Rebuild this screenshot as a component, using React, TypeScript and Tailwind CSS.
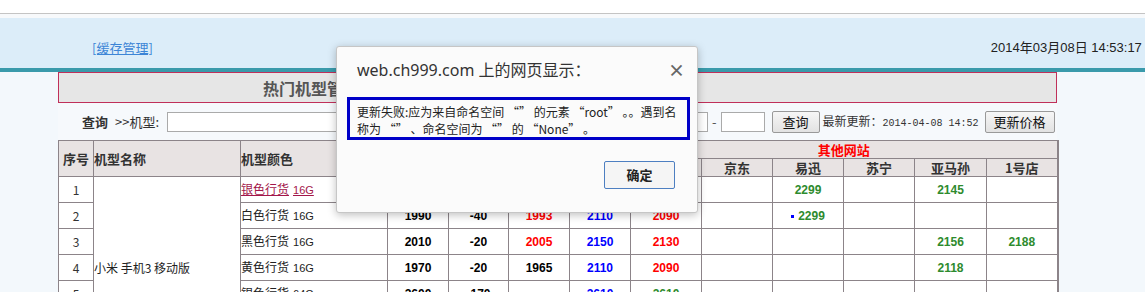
import React from "react";

const cjk = "font-['Noto_Sans_CJK_SC',sans-serif]";
const num = "font-['Liberation_Sans',Arial,sans-serif] font-bold text-[12px]";

type Row = {
  no: number;
  color: string;
  size: string;
  link?: boolean;
  a?: string;
  b?: string;
  c?: [string, string];
  d?: string;
  e?: [string, string];
  yixun?: string;
  dot?: boolean;
  amazon?: string;
  yhd?: string;
};

const rows: Row[] = [
  { no: 1, color: "银色行货", size: "16G", link: true, a: "1990", b: "-40", c: ["1993", "text-[#ff0000]"], d: "2110", e: ["2090", "text-[#ff0000]"], yixun: "2299", amazon: "2145" },
  { no: 2, color: "白色行货", size: "16G", a: "1990", b: "-40", c: ["1993", "text-[#ff0000]"], d: "2110", e: ["2090", "text-[#ff0000]"], yixun: "2299", dot: true },
  { no: 3, color: "黑色行货", size: "16G", a: "2010", b: "-20", c: ["2005", "text-[#ff0000]"], d: "2150", e: ["2130", "text-[#ff0000]"], amazon: "2156", yhd: "2188" },
  { no: 4, color: "黄色行货", size: "16G", a: "1970", b: "-20", c: ["1965", "text-black"], d: "2110", e: ["2090", "text-[#ff0000]"], amazon: "2118" },
  { no: 5, color: "银色行货", size: "64G", a: "2600", b: "-170", d: "2610", e: ["2610", "text-[#2e8b2e]"] },
  { no: 6, color: "白色行货", size: "64G", a: "2600", b: "-170", d: "2610" },
  { no: 7, color: "黑色行货", size: "64G", a: "2600", b: "-170", d: "2610" },
];

const td = "border border-[#8c8489] p-0 align-middle leading-[18px]";
const th = "border border-[#8c8489] p-0 bg-[#e8e3e3] text-[13px] leading-[16px] font-bold text-[#333]";

const App = () => {
  return (
    <div className={`relative w-[1145px] h-[292px] overflow-hidden bg-[#f3f8fc] ${cjk}`}>
      {/* browser strip */}
      <div className="h-[13px] bg-white" />
      <div className="h-px bg-[#c4c4c4]" />
      <div className="h-[4px] bg-[#f7f9fb]" />

      {/* header */}
      <div className="h-[50px] bg-[#dcedf9] flex items-center whitespace-nowrap">
        <a className="ml-[92px] text-[13px] text-[#3d85d6] underline pt-[10px]">[缓存管理]</a>
        <span className="ml-[838px] text-[13px] text-[#222] pt-[10px] font-['Liberation_Sans','Noto_Sans_CJK_SC',sans-serif]">
          2014年03月08日 14:53:17
        </span>
      </div>
      <div className="h-[4px] bg-[#3a9aab]" />

      <main className="ml-[58px] w-[999px]">
        <div className="h-[31px] bg-[#e6e6e6] border border-[#c0305a] flex items-center pl-[204px]">
          <h2 className="text-[16px] font-bold text-[#555]">热门机型管理 &gt;&gt; 小米 手机3 各渠道价格对比</h2>
        </div>

        <div className="h-[37px] flex items-center text-[13px] text-[#333] whitespace-nowrap bg-[#f6f9fc]">
          <span className="ml-[24px] font-bold">查询</span>
          <span className="ml-[7px]">&gt;&gt;机型:</span>
          <input className="ml-[8px] w-[370px] h-[20px] bg-white border border-[#aaa]" />
          <input className="ml-[20px] w-[151px] h-[20px] bg-white border border-[#aaa]" />
          <span className="mx-[4px] text-[#555]">-</span>
          <input className="w-[44px] h-[20px] bg-white border border-[#aaa]" />
          <button className="ml-[7px] w-[48px] h-[22px] border border-[#999] rounded-[2px] bg-gradient-to-b from-[#f6f6f6] to-[#e2e2e2] text-[13px] text-[#111]">
            查询
          </button>
          <span className="ml-[3px] text-[12px] text-[#333]">
            最新更新：<span className="font-['Liberation_Mono',monospace] text-[10px]">2014-04-08 14:52</span>
          </span>
          <button className="ml-[6px] w-[70px] h-[22px] border border-[#999] rounded-[2px] bg-gradient-to-b from-[#f6f6f6] to-[#e2e2e2] text-[13px] text-[#111]">
            更新价格
          </button>
        </div>

        <table className="table-fixed border-collapse w-[999px] border-r-2 border-r-[#8c8489] bg-white">
          <colgroup>
            <col className="w-[35px]" />
            <col className="w-[147px]" />
            <col className="w-[147px]" />
            <col className="w-[61px]" />
            <col className="w-[60px]" />
            <col className="w-[61px]" />
            <col className="w-[61px]" />
            <col className="w-[71px]" />
            <col className="w-[71px]" />
            <col className="w-[71px]" />
            <col className="w-[71px]" />
            <col className="w-[72px]" />
            <col className="w-[71px]" />
          </colgroup>
          <thead>
            <tr className="h-[18px]">
              <th rowSpan={2} className={`${th} text-center`}>序号</th>
              <th rowSpan={2} className={`${th} text-left`}>机型名称</th>
              <th rowSpan={2} className={`${th} text-left`}>机型颜色</th>
              <th rowSpan={2} className={th}>会员价</th>
              <th rowSpan={2} className={th}>差价</th>
              <th rowSpan={2} className={th}>成本价</th>
              <th rowSpan={2} className={th}>市场价</th>
              <th colSpan={6} className={`${th} text-[#ff0000]`}>其他网站</th>
            </tr>
            <tr className="h-[18px]">
              <th className={th}>天猫</th>
              <th className={th}>京东</th>
              <th className={th}>易迅</th>
              <th className={th}>苏宁</th>
              <th className={th}>亚马孙</th>
              <th className={th}>1号店</th>
            </tr>
          </thead>
          <tbody>
            {rows.map((r, i) => (
              <tr key={r.no} className="h-[26px]">
                <td className={`${td} text-center text-[12px] text-[#333]`}>{r.no}</td>
                {i === 0 && (
                  <td rowSpan={rows.length} className={`${td} text-left text-[12px] text-[#222]`}>
                    小米 手机3 移动版
                  </td>
                )}
                <td className={`${td} text-left text-[12px] whitespace-nowrap`}>
                  <span className={r.link ? "text-[#a3164a] underline" : "text-[#222]"}>
                    {r.color}
                    <span className="ml-[4px] font-['Liberation_Sans',sans-serif] text-[11px]">{r.size}</span>
                  </span>
                </td>
                <td className={`${td} text-center ${num} text-black`}>{r.a}</td>
                <td className={`${td} text-center ${num} text-black`}>{r.b}</td>
                <td className={`${td} text-center ${num} ${r.c ? r.c[1] : ""}`}>{r.c?.[0]}</td>
                <td className={`${td} text-center ${num} text-[#0000ff]`}>{r.d}</td>
                <td className={`${td} text-center ${num} ${r.e ? r.e[1] : ""}`}>{r.e?.[0]}</td>
                <td className={td} />
                <td className={`${td} text-center ${num} text-[#2e8b2e]`}>
                  {r.dot && <span className="inline-block w-[3px] h-[3px] bg-[#0000ff] mr-[4px] align-middle" />}
                  {r.yixun}
                </td>
                <td className={td} />
                <td className={`${td} text-center ${num} text-[#2e8b2e]`}>{r.amazon}</td>
                <td className={`${td} text-center ${num} text-[#2e8b2e]`}>{r.yhd}</td>
              </tr>
            ))}
          </tbody>
        </table>
      </main>

      {/* alert dialog */}
      <div className="absolute left-[336px] top-[46px] w-[362px] h-[167px] bg-[#fbfbfb] border border-[#c6c6c6] rounded-[3px] shadow-[0_2px_8px_rgba(0,0,0,0.25)] flex flex-col">
        <div className="flex items-start justify-between h-[50px] pl-[20px] pr-[12px] pt-[11px]">
          <div className="text-[16px] text-[#333] font-['Noto_Sans','Noto_Sans_CJK_SC',sans-serif]">web.ch999.com 上的网页显示：</div>
          <span className="text-[17px] leading-none font-bold text-[#666] mt-[3px]">×</span>
        </div>
        <div className="ml-[10px] mr-[7px] h-[43px] border-[3px] border-[#0000c8] pl-[7px] pt-[3px] text-[12px] leading-[17px] text-[#222]">
          更新失败:应为来自命名空间 “” 的元素 “root” 。。遇到名
          <br />
          称为 “” 、命名空间为 “” 的 “None” 。
        </div>
        <div className="flex justify-end mt-[21px] mr-[22px]">
          <button className="w-[71px] h-[28px] border border-[#4d7fc1] rounded-[2px] bg-[#f5f5f5] text-[13px] font-bold text-[#222]">
            确定
          </button>
        </div>
      </div>
    </div>
  );
};

export default App;
